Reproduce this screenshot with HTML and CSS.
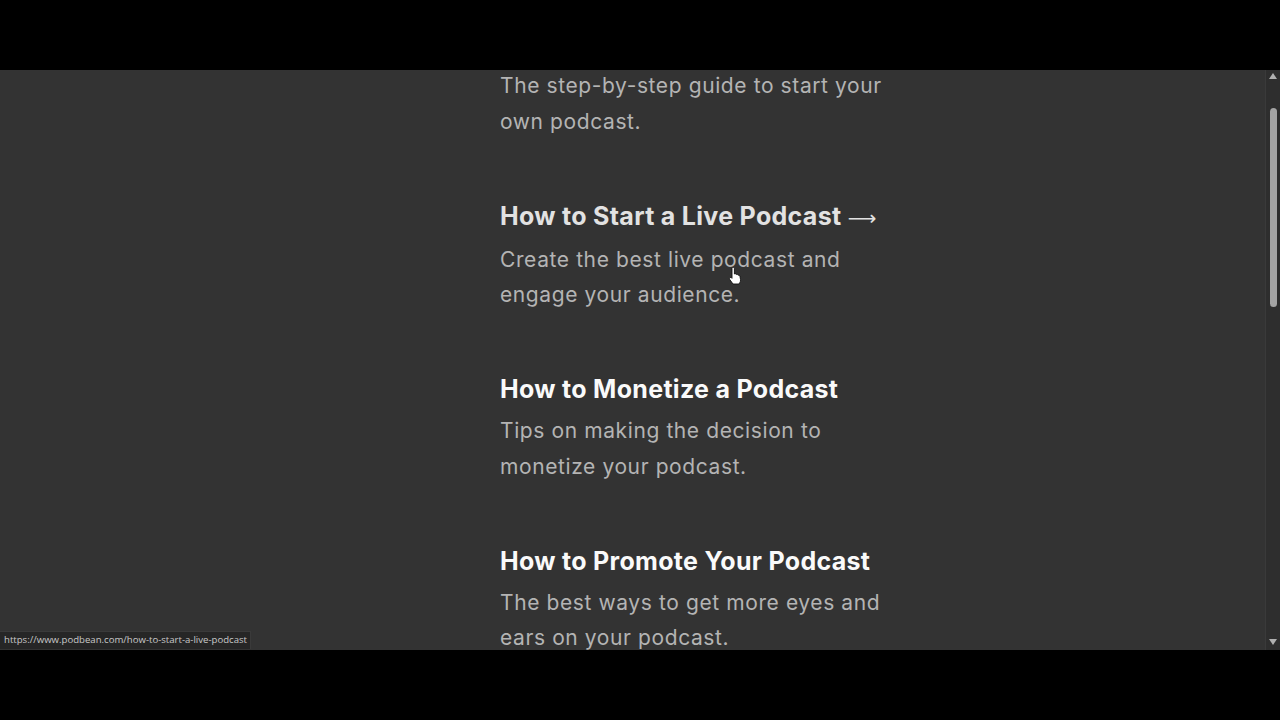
FILE: index.html
```html
<!DOCTYPE html>
<html>
<head>
  <meta charset="UTF-8">
  <title>Podcast Guides</title>
  <link rel="stylesheet" href="styles.css">
</head>
<body>
  <div class="screen">
    <div class="page">
      <div class="guides">
        <p class="guide-desc">The step-by-step guide to start your own podcast.</p>

        <div class="guide hover">
          <h3 class="guide-title">How to Start a Live Podcast <span class="arrow">&#x27F6;</span></h3>
          <p class="guide-desc">Create the best live podcast and engage your audience.</p>
        </div>

        <div class="guide">
          <h3 class="guide-title">How to Monetize a Podcast</h3>
          <p class="guide-desc">Tips on making the decision to monetize your podcast.</p>
        </div>

        <div class="guide">
          <h3 class="guide-title">How to Promote Your Podcast</h3>
          <p class="guide-desc">The best ways to get more eyes and ears on your podcast.</p>
        </div>
      </div>

      <!-- mouse pointer over the hovered link -->
      <svg class="pointer" width="14" height="18" viewBox="0 0 14 18">
        <path d="M4 1.5c0-.8.6-1.3 1.2-1.3s1.2.5 1.2 1.3V7l.4-.2c.5-.3 1.2 0 1.4.5l.1.3.4-.2c.6-.2 1.2.1 1.4.6l.1.3.3-.1c.6-.2 1.3.2 1.4.8l.6 3.4c.2 1.3-.1 2.5-.8 3.5L11 17H5l-3.2-4.4c-.5-.7-.4-1.5.2-1.9.5-.4 1.2-.3 1.6.1l.4.5z" fill="#fff" stroke="#111" stroke-width="0.9" stroke-linejoin="round"/>
      </svg>

      <div class="status-bar">https://www.podbean.com/how-to-start-a-live-podcast</div>
    </div>

    <div class="scrollbar">
      <span class="scroll-arrow up"></span>
      <div class="scroll-track">
        <div class="scroll-thumb"></div>
      </div>
      <span class="scroll-arrow down"></span>
    </div>
  </div>
</body>
</html>
```

FILE: styles.css
```css
html, body {
  margin: 0;
  padding: 0;
  background: #000;
}
body {
  width: 1280px;
  height: 720px;
  overflow: hidden;
  font-family: Inter, "Noto Sans", sans-serif;
}
.screen {
  display: flex;
  margin-top: 70px;
  height: 580px;
  background: #333333;
}
.page {
  position: relative;
  flex: 1;
  overflow: hidden;
}
.guides {
  width: 400px;
  margin: -2px 0 0 500px;
}
.guide {
  margin-top: 58.5px;
}
.guide-title {
  margin: 0 0 6px;
  font-size: 25px;
  line-height: 36px;
  font-weight: 700;
  color: #fafafa;
  letter-spacing: 0.3px;
}
.guide.hover .guide-title {
  color: #e2e2e2;
}
.arrow {
  font-family: "DejaVu Sans", sans-serif;
  font-weight: 400;
  font-size: 20px;
}
.guide-desc {
  margin: 0;
  width: 390px;
  font-size: 21px;
  line-height: 35.5px;
  color: #b4b4b4;
  letter-spacing: 0.6px;
}
.pointer {
  position: absolute;
  left: 728px;
  top: 197px;
}
.status-bar {
  position: absolute;
  left: 0;
  bottom: 1px;
  padding: 2px 3px 3px 4px;
  background: #262626;
  border: 1px solid #3a3a3a;
  border-left: none;
  border-bottom: none;
  color: #c8c8c8;
  font-family: "Open Sans", "Liberation Sans", sans-serif;
  font-size: 9.6px;
  line-height: 12px;
}
.scrollbar {
  width: 15px;
  display: flex;
  flex-direction: column;
  align-items: center;
  background: #2e2e2e;
  border-left: 1px solid #3a3a3a;
  box-sizing: border-box;
}
.scroll-arrow {
  width: 0;
  height: 0;
  border-left: 4px solid transparent;
  border-right: 4px solid transparent;
}
.scroll-arrow.up {
  margin-top: 3px;
  border-bottom: 6px solid #b0b0b0;
}
.scroll-arrow.down {
  margin-bottom: 5px;
  border-top: 6px solid #b0b0b0;
}
.scroll-track {
  flex: 1;
  width: 100%;
  display: flex;
  justify-content: center;
}
.scroll-thumb {
  width: 7px;
  height: 199px;
  margin-top: 29px;
  border-radius: 4px;
  background: #a4a4a4;
}
```
